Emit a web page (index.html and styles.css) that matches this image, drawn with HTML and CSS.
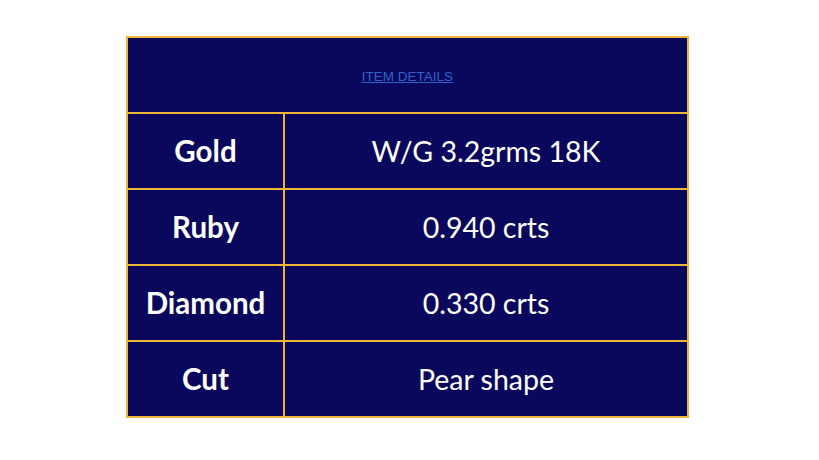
FILE: index.html
```html
<!DOCTYPE html>
<html>
<head>
<meta charset="utf-8">
<link rel="stylesheet" href="styles.css">
</head>
<body>
<div class="wrap">
<table class="details">
  <tr><th colspan="2" class="head"><a href="#">ITEM DETAILS</a></th></tr>
  <tr><td class="label">Gold</td><td class="value">W/G 3.2grms 18K</td></tr>
  <tr><td class="label">Ruby</td><td class="value">0.940 crts</td></tr>
  <tr><td class="label">Diamond</td><td class="value">0.330 crts</td></tr>
  <tr><td class="label">Cut</td><td class="value">Pear shape</td></tr>
</table>
</div>
</body>
</html>
```
FILE: styles.css
```css
html, body { margin: 0; padding: 0; background: #fff; }
.wrap { padding: 36px 0 0 126px; }
.details {
  border-collapse: collapse;
  width: 563px;
  background: #0a085c;
  font-family: "Lato", "Open Sans", sans-serif;
  color: #fff;
}
.details th, .details td {
  border: 2px solid #ebb535;
  text-align: center;
  vertical-align: middle;
  padding: 0;
  height: 74px;
  line-height: 1;
}
.head { font-weight: normal; padding-bottom: 4px; height: 70px; }
.head a {
  font-family: "Liberation Sans", Arial, sans-serif;
  font-size: 13.5px;
  color: #2f63c9;
  text-decoration: underline;
}
.label { width: 155px; font-weight: bold; font-size: 29.5px; padding-top: 3px; height: 71px; }
.value { font-size: 28.5px; font-weight: normal; padding-top: 3px; height: 71px; }
```
